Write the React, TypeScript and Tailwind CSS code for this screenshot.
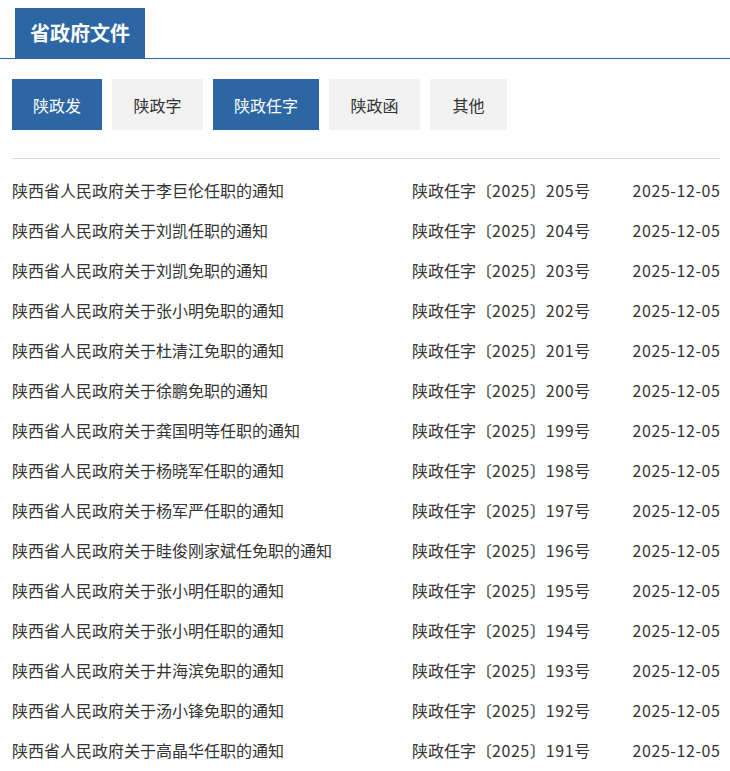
import React from "react";

const tabs = [
  { label: "陕政发", active: true, w: "w-[90px]" },
  { label: "陕政字", active: false, w: "w-[91px]" },
  { label: "陕政任字", active: true, w: "w-[106px]" },
  { label: "陕政函", active: false, w: "w-[91px]" },
  { label: "其他", active: false, w: "w-[77px]" },
];

const rows: [string, string][] = [
  ["陕西省人民政府关于李巨伦任职的通知", "205"],
  ["陕西省人民政府关于刘凯任职的通知", "204"],
  ["陕西省人民政府关于刘凯免职的通知", "203"],
  ["陕西省人民政府关于张小明免职的通知", "202"],
  ["陕西省人民政府关于杜清江免职的通知", "201"],
  ["陕西省人民政府关于徐鹏免职的通知", "200"],
  ["陕西省人民政府关于龚国明等任职的通知", "199"],
  ["陕西省人民政府关于杨晓军任职的通知", "198"],
  ["陕西省人民政府关于杨军严任职的通知", "197"],
  ["陕西省人民政府关于眭俊刚家斌任免职的通知", "196"],
  ["陕西省人民政府关于张小明任职的通知", "195"],
  ["陕西省人民政府关于张小明任职的通知", "194"],
  ["陕西省人民政府关于井海滨免职的通知", "193"],
  ["陕西省人民政府关于汤小锋免职的通知", "192"],
  ["陕西省人民政府关于高晶华任职的通知", "191"],
];

export default function App() {
  return (
    <div
      className="w-[730px] bg-white text-[#333]"
      style={{ fontFamily: '"Microsoft YaHei", "Noto Sans CJK SC", "Noto Sans", sans-serif' }}
    >
      <div className="pt-2 border-b border-[#2c66a5]">
        <div className="ml-[15px] w-[130px] h-[50px] bg-[#2c66a5] text-white text-[20px] font-bold flex items-center justify-center">
          省政府文件
        </div>
      </div>
      <div className="pl-3 pr-[10px]">
        <div className="flex gap-[10px] mt-5">
          {tabs.map((t) => (
            <div
              key={t.label}
              className={
                (t.active
                  ? "bg-[#2c66a5] text-white "
                  : "bg-[#f2f2f2] text-[#333] ") +
                t.w +
                " h-[51px] flex items-center justify-center text-[16px]"
              }
            >
              {t.label}
            </div>
          ))}
        </div>
        <div className="mt-7 h-px bg-[#d9d9d9]" />
        <div className="mt-[11px]">
          {rows.map(([title, num], i) => (
            <div key={i} className="flex items-center h-10 text-[16px]">
              <div className="w-[400px] whitespace-nowrap">{title}</div>
              <div className="whitespace-nowrap">
                陕政任字〔<span className="tracking-[0.57px]">2025</span>〕
                <span className="tracking-[0.57px]">{num}</span>号
              </div>
              <div className="ml-auto whitespace-nowrap tracking-[0.6px] -mr-[0.6px]">2025-12-05</div>
            </div>
          ))}
        </div>
      </div>
    </div>
  );
}
